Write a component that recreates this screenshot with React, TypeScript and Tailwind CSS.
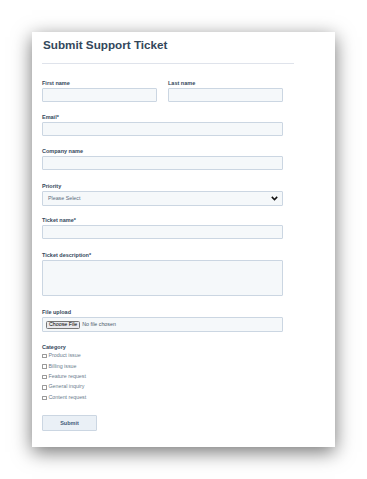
import React from 'react';

const font = { fontFamily: '"Liberation Sans", Arial, sans-serif' };

const Label = ({ children }: { children: React.ReactNode }) => (
    <div className="text-[5.5px] leading-[8px] font-bold text-[#33475b] mb-[1px]">{children}</div>
);

const Input = ({ className = '' }: { className?: string }) => (
    <div className={`h-[14px] bg-[#f5f8fa] border border-[#cbd6e2] rounded-[1px] ${className}`}></div>
);

const categories = ['Product issue', 'Billing issue', 'Feature request', 'General inquiry', 'Content request'];

const App = () => {
    return (
        <div className="w-[367px] h-[479px] bg-white pt-[32px] pl-[32px]" style={font}>
            <div className="w-[303px] h-[415px] bg-white shadow-[0_5px_18px_rgba(0,0,0,0.55)] pl-[10px]">
                {/* Header */}
                <h1 className="pt-[5px] pl-[1px] text-[11.7px] leading-[16px] font-bold text-[#33475b]">Submit Support Ticket</h1>
                <div className="mt-[10px] w-[252px] h-[1px] bg-[#dfe3eb]"></div>

                {/* Form fields */}
                <div className="w-[241px] mt-[15px] flex flex-col">
                    <div className="flex gap-[11px]">
                        <div className="flex-1">
                            <Label>First name</Label>
                            <Input />
                        </div>
                        <div className="flex-1">
                            <Label>Last name</Label>
                            <Input />
                        </div>
                    </div>

                    <div className="mt-[11px]">
                        <Label>Email*</Label>
                        <Input />
                    </div>

                    <div className="mt-[11px]">
                        <Label>Company name</Label>
                        <Input />
                    </div>

                    <div className="mt-[12px]">
                        <Label>Priority</Label>
                        <div className="h-[15px] bg-[#f5f8fa] border border-[#cbd6e2] rounded-[1px] flex items-center justify-between pl-[5px] pr-[4px]">
                            <span className="text-[5.3px] text-[#5a6b7c]">Please Select</span>
                            <svg width="7" height="5" viewBox="0 0 7 5">
                                <path d="M0.8 0.9 L3.5 3.6 L6.2 0.9" fill="none" stroke="#111" strokeWidth="1.5" />
                            </svg>
                        </div>
                    </div>

                    <div className="mt-[10px]">
                        <Label>Ticket name*</Label>
                        <Input />
                    </div>

                    <div className="mt-[12px]">
                        <Label>Ticket description*</Label>
                        <div className="h-[36px] bg-[#f5f8fa] border border-[#cbd6e2] rounded-[1px]"></div>
                    </div>

                    <div className="mt-[12px]">
                        <Label>File upload</Label>
                        <div className="h-[15px] bg-[#f5f8fa] border border-[#cbd6e2] rounded-[1px] flex items-center pl-[3px] gap-[2px]">
                            <span className="h-[8px] px-[2px] flex items-center text-[5.3px] text-black bg-[#e9e9ed] border border-[#767676] rounded-[1.5px]">Choose File</span>
                            <span className="text-[5.3px] text-[#4a5a6a]">No file chosen</span>
                        </div>
                    </div>

                    {/* Category checkboxes */}
                    <div className="mt-[11px]">
                        <div className="text-[5.5px] leading-[8px] font-bold text-[#33475b]">Category</div>
                        <div className="flex flex-col">
                            {categories.map((c) => (
                                <div key={c} className="h-[10.4px] flex items-center gap-[2px]">
                                    <span className="w-[4.5px] h-[4.5px] border border-[#9a9a9a] bg-white rounded-[0.5px]"></span>
                                    <span className="text-[5.3px] text-[#6b7c8d]">{c}</span>
                                </div>
                            ))}
                        </div>
                    </div>

                    <button className="mt-[12px] w-[55px] h-[16px] bg-[#eaf0f6] border border-[#cbd6e2] rounded-[1px] text-[5.5px] font-bold text-[#425b76]">
                        Submit
                    </button>
                </div>
            </div>
        </div>
    );
};

export default App;
